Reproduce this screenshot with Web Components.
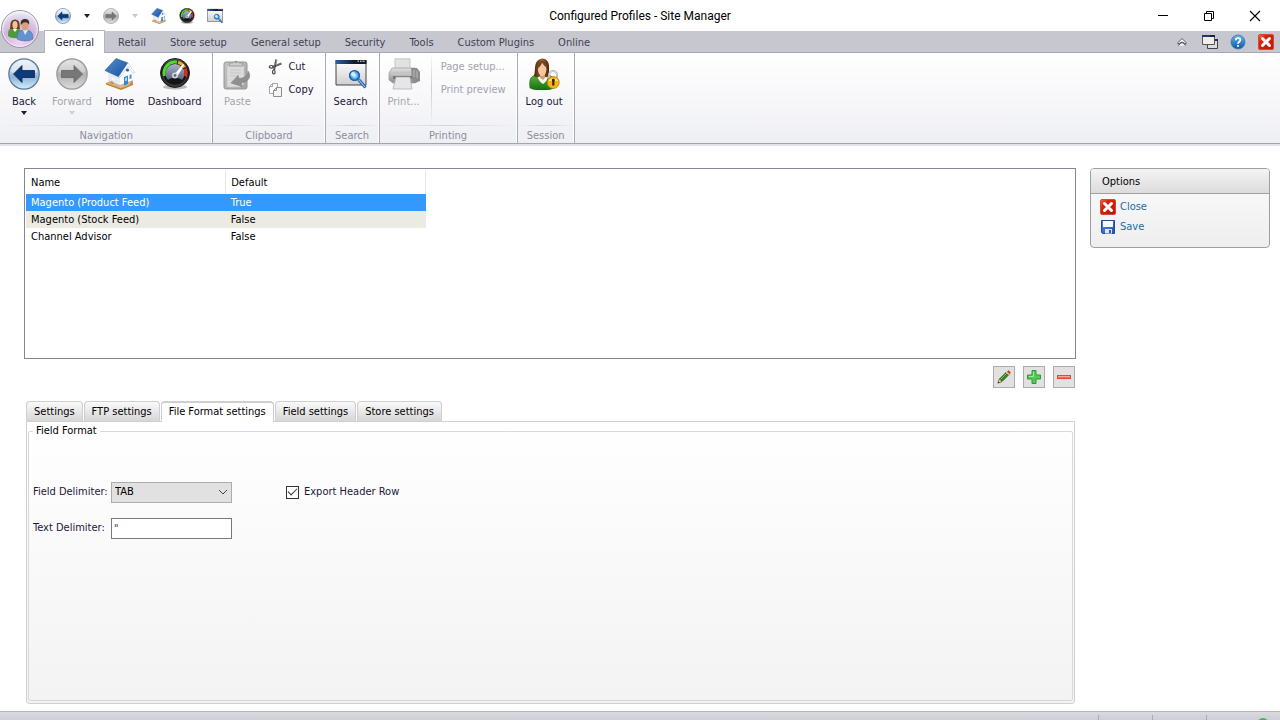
<!DOCTYPE html>
<html lang="en">
<head>
<meta charset="utf-8">
<title>Configured Profiles - Site Manager</title>
<style>
  body {
    margin: 0;
    height: 100vh;
    overflow: hidden;
    display: flex;
    flex-direction: column;
    background: #fff;
    color: #000;
    font: 11px/16px "DejaVu Sans Condensed", "DejaVu Sans", sans-serif;
  }
  main {
    flex: 1;
    min-height: 0;
    display: flex;
    align-items: flex-start;
    gap: 14px;
    padding: 24px 10px 7px 24px;
    box-sizing: border-box;
  }
  .workspace {
    flex: 1;
    align-self: stretch;
    display: flex;
    flex-direction: column;
  }
</style>
</head>
<body>
<title-bar>Configured Profiles - Site Manager</title-bar>
<ribbon-tabs></ribbon-tabs>
<ribbon-bar>
  <ribbon-group label="Navigation">
    <ribbon-button icon="back" arrow>Back</ribbon-button>
    <ribbon-button icon="forward" arrow disabled>Forward</ribbon-button>
    <ribbon-button icon="home">Home</ribbon-button>
    <ribbon-button icon="dashboard">Dashboard</ribbon-button>
  </ribbon-group>
  <ribbon-group label="Clipboard">
    <ribbon-button icon="paste" disabled>Paste</ribbon-button>
    <ribbon-column>
      <ribbon-button small icon="cut">Cut</ribbon-button>
      <ribbon-button small icon="copy">Copy</ribbon-button>
    </ribbon-column>
  </ribbon-group>
  <ribbon-group label="Search">
    <ribbon-button icon="search">Search</ribbon-button>
  </ribbon-group>
  <ribbon-group label="Printing">
    <ribbon-button icon="print" disabled>Print...</ribbon-button>
    <ribbon-column divided>
      <ribbon-button small disabled>Page setup...</ribbon-button>
      <ribbon-button small disabled>Print preview</ribbon-button>
    </ribbon-column>
  </ribbon-group>
  <ribbon-group label="Session">
    <ribbon-button icon="logout">Log out</ribbon-button>
  </ribbon-group>
</ribbon-bar>
<main>
  <div class="workspace">
    <profile-list></profile-list>
    <list-actions></list-actions>
    <settings-tabs>
      <format-form></format-form>
    </settings-tabs>
  </div>
  <options-panel></options-panel>
</main>
<status-bar></status-bar>

<script>
// Icon artwork. Everything is drawn on its own viewBox and scaled by ui-icon.
const ICONS = {
  back: ['0 0 32 32', `
    <defs><linearGradient id="a" x2="0" y2="1"><stop stop-color="#e4edf6"/><stop offset=".45" stop-color="#b4cbe2"/><stop offset=".6" stop-color="#8fb2d6"/><stop offset="1" stop-color="#d3f1fb"/></linearGradient></defs>
    <circle cx="16" cy="16" r="15.2" fill="url(#a)" stroke="#5b7899" stroke-width="1.2"/>
    <path d="M3 14a13 12 0 0 1 26 0c-8 3-18 3-26 0z" fill="#fff" opacity=".45"/>
    <path d="M5.500 16 14 7.500v5h12.500v7H14v5z" fill="#0d3a78" stroke="#072555" stroke-width=".8"/>`],
  forward: ['0 0 32 32', `
    <defs><linearGradient id="a" x2="0" y2="1"><stop stop-color="#dcdcdc"/><stop offset=".55" stop-color="#b2b2b2"/><stop offset="1" stop-color="#dedede"/></linearGradient></defs>
    <circle cx="16" cy="16" r="15.200" fill="url(#a)" stroke="#999" stroke-width="1.200"/>
    <path d="M3 14a13 12 0 0 1 26 0c-8 3-18 3-26 0z" fill="#fff" opacity=".25"/>
    <path d="M26.500 16 18 7.500v5H5.500v7H18v5z" fill="#777" stroke="#666" stroke-width=".8"/>`],
  home: ['0 0 32 32', `
    <defs><linearGradient id="a" x2="1" y2="1"><stop stop-color="#4f8fd2"/><stop offset="1" stop-color="#1c4f9d"/></linearGradient></defs>
    <path d="m2 25 8-4 19 4-12 6z" fill="#dda85a"/><path d="m2 25 15 5.500 12-5v1.500l-12 5-15-5.500z" fill="#b98034"/>
    <path d="M4 13v11l12 5V16z" fill="#e9eef4"/><path d="M16 18 24 6l5.500 9v9L16 29.500z" fill="#fafcff"/>
    <path d="M5 22.500 16 27v2.500L5 25zM16 27l13-5v2.500l-13 5z" fill="#c9b79b"/>
    <path d="M12 .5 24 5l-9 14L1 12.500z" fill="url(#a)" stroke="#2a5d9f" stroke-width=".6"/>
    <path d="m24 5 7 9.500-2 .8L24 8l-8 11.500-1.300-.7z" fill="#fff" stroke="#aab9cb" stroke-width=".5"/>
    <path d="m20 19 4-1.500v8.500l-4 1.500z" fill="#3d86c8"/><path d="m21 20 2-.7v3.200l-2 .7z" fill="#a6dcf8"/>
    <path d="m25.500 17 2-.8v4.300l-2 .8z" fill="#4b92d4"/><circle cx="23.500" cy="12" r="1.600" fill="#2864ad"/>
    <path d="m7 18 4 1.600v3.800L7 22z" fill="#fff" stroke="#c8d2dc" stroke-width=".5"/>
    <path d="m6 25 2-2 2 3zM25 27l3-4 1 3z" fill="#d77b2c"/>`],
  dashboard: ['0 0 32 32', `
    <defs><linearGradient id="a" x2="0" y2="1"><stop stop-color="#555"/><stop offset=".4" stop-color="#111"/><stop offset="1" stop-color="#333"/></linearGradient>
    <linearGradient id="b" x2="0" y2="1"><stop stop-color="#aab3c5"/><stop offset="1" stop-color="#59637a"/></linearGradient></defs>
    <ellipse cx="16" cy="29" rx="12" ry="2.500" fill="#bbb"/>
    <circle cx="16" cy="15" r="14.500" fill="url(#a)" stroke="#222"/>
    <circle cx="16" cy="15" r="12.500" fill="#161616" stroke="#555" stroke-width=".7"/>
    <path d="M5.500 18A11 11 0 0 1 18 4.200" fill="none" stroke="#45df25" stroke-width="3"/>
    <path d="M19 4.400a11 11 0 0 1 6.500 5" fill="none" stroke="#f6a919" stroke-width="3"/>
    <path d="M26 10.500a11 11 0 0 1 .5 8" fill="none" stroke="#ee2517" stroke-width="3"/>
    <path d="M9 22a9.500 9.500 0 1 1 14 0c-3-3-11-3-14 0z" fill="url(#b)"/>
    <path d="m15 17 9-11 1.200 1L18 19z" fill="#fff"/><circle cx="16" cy="17.500" r="3" fill="#d5dae4"/><circle cx="16" cy="17.500" r="1.400" fill="#626b7d"/>`],
  paste: ['0 0 32 32', `
    <defs><linearGradient id="a" x2="1" y2="1"><stop stop-color="#c4c4c4"/><stop offset="1" stop-color="#a4a4a4"/></linearGradient></defs>
    <rect x="3" y="4" width="23" height="27" rx="2" fill="url(#a)" stroke="#979797"/>
    <path d="M6 8h17v18l-4 3H6z" fill="#dadada" stroke="#c4c4c4" stroke-width=".6"/>
    <path d="M8.500 8V5h3.500a3.500 3.500 0 0 1 6 0h3.500v3z" fill="#cdcdcd" stroke="#999" stroke-width=".8"/>
    <circle cx="15" cy="4" r="1.200" fill="#999"/>
    <path d="M9 12h11M9 15h11M9 18h8" stroke="#c9c9c9"/>
    <path d="M27 13c4 5 1 11-7 12l1 3.500L10 25l7-7.500 1 3c5 0 9-3 9-7.500z" fill="#909090" stroke="#838383" stroke-width=".6"/>`],
  cut: ['0 0 16 16', `
    <path d="M8.500.500C7 4 7.500 7 6 11" stroke="#555" stroke-width="2" fill="none"/>
    <path d="M13.500 4.500 4.500 8" stroke="#666" stroke-width="2" fill="none"/>
    <path d="M8.500.500C8.500 4 8 7 7 10" stroke="#bbb" stroke-width=".6" fill="none"/>
    <ellipse cx="3.300" cy="7.800" rx="2" ry="1.300" fill="none" stroke="#444" stroke-width="1.200"/>
    <ellipse cx="5.800" cy="13" rx="1.300" ry="2" fill="none" stroke="#444" stroke-width="1.200"/>
    <circle cx="7.400" cy="7" r=".8" fill="#222"/>`],
  copy: ['0 0 16 16', `
    <path d="M4.500 1.500h5v10h-8v-7z" fill="#fafafa" stroke="#a5a5a5"/><path d="M4.500 1.500v3h-3" fill="none" stroke="#a5a5a5"/>
    <path d="M8.500 5.500h5v9h-8v-6z" fill="#f4f4f4" stroke="#8c8c8c"/><path d="M8.500 5.500v3h-3" fill="none" stroke="#8c8c8c"/>`],
  search: ['0 0 32 32', `
    <defs><linearGradient id="a" x2="0" y2="1"><stop stop-color="#fff"/><stop offset="1" stop-color="#cfcfcf"/></linearGradient>
    <linearGradient id="c"><stop stop-color="#2a62ad"/><stop offset=".6" stop-color="#141c2c"/></linearGradient>
    <radialGradient id="b"><stop stop-color="#dff9ff"/><stop offset=".5" stop-color="#69c5f5"/><stop offset="1" stop-color="#1464c8"/></radialGradient></defs>
    <path d="M1 2.500h30V27H1z" fill="url(#a)" stroke="#444"/>
    <path d="M.5 2h31v4H.5z" fill="url(#c)"/>
    <path d="M22.500 3.200h1.500m1 0h1.500m1 0h2" stroke="#eee"/>
    <path d="m23.500 21.500 7 8" stroke="#20539c" stroke-width="3.200"/><path d="m23.500 21.500 6.500 7.500" stroke="#80b6e8" stroke-width="1.300"/>
    <circle cx="19.500" cy="17.500" r="5" fill="url(#b)" stroke="#2059ad" stroke-width="1.200"/>
    <path d="M19.500 13.500v4h-4a4 4 0 0 1 4-4z" fill="#fff" opacity=".7"/>`],
  print: ['0 0 32 32', `
    <defs><linearGradient id="a" x2="0" y2="1"><stop stop-color="#e1e1e1"/><stop offset="1" stop-color="#8c8c8c"/></linearGradient></defs>
    <path d="M7 .8h15V13H7z" fill="#e2e2e2" stroke="#bbb" stroke-width=".8"/>
    <path d="M4 10h23l4 4v8l-4 3H5l-4-3v-7z" fill="url(#a)" stroke="#999" stroke-width=".7"/>
    <path d="M23 10h6l3 4v9l-5 2-3-4z" fill="#8c8c8c"/><path d="M3 14h20v3H3z" fill="#c4c4c4"/>
    <path d="M5 18h19v3H5z" fill="#777"/><path d="M8 19h14l2 12H5z" fill="#e6e6e6" stroke="#aaa" stroke-width=".7"/>
    <path d="M26 12v7M29 13v7" stroke="#bbb"/>`],
  logout: ['0 0 32 32', `
    <defs><linearGradient id="a" x2="0" y2="1"><stop stop-color="#57b33b"/><stop offset="1" stop-color="#13700e"/></linearGradient>
    <linearGradient id="b" x2="1"><stop stop-color="#4b270d"/><stop offset=".5" stop-color="#9b6032"/><stop offset="1" stop-color="#4b270d"/></linearGradient></defs>
    <path d="M2 30c-1-7 0-12 6-13h12c6 1 7 7 6 13-6 3-18 3-24 0z" fill="url(#a)" stroke="#17620f" stroke-width=".6"/>
    <path d="M9 16c1 6 3 8 6 10 3-2 5-5 5-10z" fill="#f4faf0"/>
    <path d="M6 18C8 12 5 2 14 .5c9 .5 7 10 7 17-2 2-3 2-5 1h-4c-2 1-4 1-6-.5z" fill="url(#b)"/>
    <path d="M12 16h5v4l-2 2-3-2z" fill="#d99c73"/><ellipse cx="14.200" cy="11.500" rx="4.200" ry="6.500" fill="#f5c6a2"/>
    <path d="M10 10c2-1 4-4 4-6 1 3 3 4 5 6 0-5-2-7-5-7s-5 3-4 7z" fill="#7a431d"/>
    <path d="M21 20v-3a4 4 0 0 1 8 0v3" fill="none" stroke="#aaa" stroke-width="2"/><path d="M21 20v-3a4 4 0 0 1 8 0v3" fill="none" stroke="#eee" stroke-width=".7"/>
    <circle cx="25.200" cy="24.500" r="6" fill="#f4b51b" stroke="#b67b07" stroke-width=".8"/><path d="M20.500 23a5 4 0 0 1 9.500 0z" fill="#ffe277"/>
    <path d="M24.200 22.500h2.200v5h-2.200z" fill="#3b2400"/><circle cx="25.300" cy="22" r="1.500" fill="#3b2400"/>`],
  users: ['0 0 40 40', `
    <defs><radialGradient id="a" cx=".5" cy=".85" r=".9"><stop stop-color="#f3d6f3"/><stop offset=".5" stop-color="#d2b3dc"/><stop offset=".8" stop-color="#e3dced"/><stop offset="1" stop-color="#fff"/></radialGradient></defs>
    <circle cx="20" cy="20" r="18.500" fill="url(#a)" stroke="#9d93ab"/><circle cx="20" cy="20" r="17.300" fill="none" stroke="#fff" opacity=".65"/>
    <path d="M8 27c0-6 1-8 6-8s8 2 8 8c-4 3-10 3-14 0z" fill="#4f9a39"/><path d="m12 19 3 4 3-4z" fill="#fff"/>
    <path d="M10 20c1-3-1-9 5-9.500 6 .5 4 6 5 9.500z" fill="#6b3b19"/><ellipse cx="15" cy="16" rx="2.600" ry="4" fill="#f1c29f"/>
    <path d="M17 30c0-7 2-9 8-9s8 3 8 9c-4 2.500-12 2.500-16 0z" fill="#6592cc" stroke="#446eaa" stroke-width=".6"/>
    <path d="m23 21 2 5 3-5z" fill="#dceaf8"/><ellipse cx="25" cy="16.500" rx="3.400" ry="5" fill="#dca078"/>
    <path d="M21 16c-1-4 1-6 4-6s5 2 4 6c-1-3-5-4-8 0z" fill="#3c3029"/>`],
  windows: ['0 0 16 16', `
    <path d="M5.500 5.500h10v9h-10z" fill="#ddd" stroke="#444"/><path d="M5 5h11v2H5z" fill="#16376a"/>
    <path d="M.5 1.500h12v9H.5z" fill="#eee" stroke="#555"/><path d="M0 1h13v2H0z" fill="#163c73"/><path d="M8 1h5v2H8z" fill="#222"/>`],
  help: ['0 0 16 16', `
    <defs><linearGradient id="a" x2="0" y2="1"><stop stop-color="#67b8ea"/><stop offset="1" stop-color="#0a55a6"/></linearGradient></defs>
    <circle cx="8" cy="8" r="7" fill="url(#a)" stroke="#3975ab" stroke-width=".8"/>
    <path d="M5.800 6.300c0-3 4.600-3 4.600-.3C10.400 7.800 8 7.800 8 9.800" fill="none" stroke="#fff" stroke-width="1.700"/><circle cx="8" cy="12" r="1.100" fill="#fff"/>`],
  close: ['0 0 16 16', `
    <defs><linearGradient id="a" x2="1" y2="1"><stop stop-color="#f36c45"/><stop offset=".3" stop-color="#d62713"/><stop offset="1" stop-color="#b91507"/></linearGradient></defs>
    <rect x=".5" y=".5" width="15" height="15" rx="1.500" fill="url(#a)" stroke="#d9472c"/>
    <path d="m4.500 4.500 7 7m0-7-7 7" stroke="#fff" stroke-width="3" stroke-linecap="round"/>`],
  save: ['0 0 16 16', `
    <defs><linearGradient id="a" x2="1" y2="1"><stop stop-color="#5589dc"/><stop offset="1" stop-color="#1d55b8"/></linearGradient></defs>
    <path d="M1.500 1.500h13v13h-12l-1-1z" fill="url(#a)" stroke="#234c96"/>
    <path d="M3 2h10v6H3z" fill="#f5f9ff"/><path d="M5 10h7v4.500H5z" fill="#dfe5ed"/><path d="M9 11h2v3H9z" fill="#2a59a8"/>`],
  pencil: ['0 0 16 16', `
    <path d="m2.500 13.500 1-3.500L10.500 3l2.500 2.500L6 12.500z" fill="#2f8426" stroke="#27491d" stroke-width=".8"/>
    <path d="m4.500 10.500 7-7" stroke="#8fd06c" stroke-width=".8"/><path d="m2 14 1.300-4L6 12.700z" fill="#f4d68d" stroke="#6d4b16" stroke-width=".5"/>
    <path d="m10 3.500 1-1L13.500 5l-1 1z" fill="#e5d29a"/><path d="m11 2.500 1.500-1.300L14.800 3.500 13.500 5z" fill="#dd291b"/><path d="m1.500 14.500.8-2 1.200 1.200z" fill="#222"/>`],
  plus: ['0 0 16 16', `<path d="M6 1.500h4V6h4.500v4H10v4.500H6V10H1.500V6H6z" fill="#54ca54" stroke="#289b31"/><path d="M7.500 3v4.500H3" fill="none" stroke="#a1eb99"/>`],
  minus: ['0 0 16 16', `<rect x="1.500" y="6.500" width="13" height="3" fill="#f66f51" stroke="#df4a2e"/><path d="M2 7.500h12" stroke="#ffa68f"/>`],
  chevron: ['0 0 12 12', `<path d="m2 6.500 4-4 4 4v1.500L6 6 2 8zm0 3 4-3 4 3" fill="#fff" stroke="#545866" stroke-width="1"/>`],
  minimize: ['0 0 12 12', `<path d="M1 5.500h10" stroke="#000"/>`],
  restore: ['0 0 12 12', `<path d="M1.500 3.500h7v7h-7zM3.500 3.500v-2h7v7h-2" fill="none" stroke="#000"/>`],
  exit: ['0 0 12 12', `<path d="m1 1 10 10M11 1 1 11" stroke="#000" stroke-width="1.100"/>`]
};

const BUTTON_RESET = `
  button {
    margin: 0;
    padding: 0;
    border: 0;
    background: none;
    color: inherit;
    font: inherit;
  }
`;

class UiIcon extends HTMLElement {
  connectedCallback() {
    const [box, art] = ICONS[this.getAttribute('name')];
    const size = this.getAttribute('size') || 16;
    this.attachShadow({ mode: 'open' }).innerHTML = `
      <style>
        :host { display: block; flex: none; width: ${size}px; height: ${size}px; }
        svg { display: block; width: 100%; height: 100%; }
      </style>
      <svg viewBox="${box}" aria-hidden="true">${art}</svg>
    `;
  }
}
customElements.define('ui-icon', UiIcon);

class TitleBar extends HTMLElement {
  connectedCallback() {
    this.attachShadow({ mode: 'open' }).innerHTML = `
      <style>
        :host {
          display: grid;
          grid-template-columns: 1fr auto 1fr;
          align-items: center;
          flex: none;
          height: 31px;
          position: relative;
          background: #fff;
        }
        ${BUTTON_RESET}
        .quick { display: flex; padding-left: 49px; }
        .quick button { width: 28px; height: 28px; display: grid; place-items: center; }
        .quick .drop { width: 20px; }
        .drop::before {
          content: '';
          border: 3px solid transparent;
          border-top: 4px solid #222;
          border-bottom: 0;
        }
        .drop:disabled::before { border-top-color: #c8c8cc; }
        h1 { margin: 0; font: 12px/28px Roboto, sans-serif; }
        .controls { display: flex; justify-content: flex-end; padding-right: 2px; }
        .controls button { width: 46px; height: 28px; display: grid; place-items: center; }
        .orb { position: absolute; left: 0; top: 9px; z-index: 2; }
      </style>
      <div class="quick">
        <button aria-label="Back"><ui-icon name="back"></ui-icon></button>
        <button class="drop" aria-label="Back history"></button>
        <button aria-label="Forward" disabled><ui-icon name="forward"></ui-icon></button>
        <button class="drop" aria-label="Forward history" disabled></button>
        <button aria-label="Home"><ui-icon name="home"></ui-icon></button>
        <button aria-label="Dashboard"><ui-icon name="dashboard"></ui-icon></button>
        <button aria-label="Search"><ui-icon name="search"></ui-icon></button>
      </div>
      <h1><slot></slot></h1>
      <div class="controls">
        <button aria-label="Minimize"><ui-icon name="minimize" size="12"></ui-icon></button>
        <button aria-label="Restore"><ui-icon name="restore" size="12"></ui-icon></button>
        <button aria-label="Close window"><ui-icon name="exit" size="12"></ui-icon></button>
      </div>
      <button class="orb" aria-label="Application menu"><ui-icon name="users" size="40"></ui-icon></button>
    `;
  }
}
customElements.define('title-bar', TitleBar);

class RibbonTabs extends HTMLElement {
  connectedCallback() {
    const tabs = ['General', 'Retail', 'Store setup', 'General setup', 'Security', 'Tools', 'Custom Plugins', 'Online'];
    this.attachShadow({ mode: 'open' }).innerHTML = `
      <style>
        :host {
          display: flex;
          justify-content: space-between;
          flex: none;
          height: 22px;
          background: #c7c7cf;
          border-bottom: 1px solid #a6a8b6;
          box-sizing: border-box;
        }
        ${BUTTON_RESET}
        nav { display: flex; gap: 4px; padding-left: 45px; }
        nav button { height: 22px; padding: 2px 10px 0; color: #3f3f55; }
        nav button[aria-selected=true] { background: #fff; color: #1e1b3a; box-shadow: 0 0 0 1px #b3b4c1; clip-path: inset(-1px -1px 0); }
        .tools { display: flex; }
        .tools button { width: 28px; display: grid; place-items: center; }
      </style>
      <nav role="tablist">
        ${tabs.map((t, i) => `<button role="tab" aria-selected="${i === 0}">${t}</button>`).join('')}
      </nav>
      <div class="tools">
        <button aria-label="Collapse ribbon"><ui-icon name="chevron" size="12"></ui-icon></button>
        <button aria-label="Windows"><ui-icon name="windows"></ui-icon></button>
        <button aria-label="Help"><ui-icon name="help"></ui-icon></button>
        <button aria-label="Close page"><ui-icon name="close"></ui-icon></button>
      </div>
    `;
  }
}
customElements.define('ribbon-tabs', RibbonTabs);

class RibbonBar extends HTMLElement {
  connectedCallback() {
    this.attachShadow({ mode: 'open' }).innerHTML = `
      <style>
        :host {
          display: flex;
          flex: none;
          height: 91px;
          box-sizing: border-box;
          border-bottom: 1px solid #a3a4ae;
          background: linear-gradient(#fff, #f6f6f9 60%, #eeeff3);
          box-shadow: 0 2px 1px #e3e3e7;
        }
      </style>
      <slot></slot>
    `;
  }
}
customElements.define('ribbon-bar', RibbonBar);

class RibbonGroup extends HTMLElement {
  connectedCallback() {
    this.attachShadow({ mode: 'open' }).innerHTML = `
      <style>
        :host {
          display: flex;
          flex-direction: column;
          border-right: 1px solid #a9aab6;
          box-shadow: inset -1px 0 #fff;
        }
        .items { flex: 1; display: flex; padding: 0 5px 0 2px; }
        .label {
          height: 17px;
          line-height: 19px;
          text-align: center;
          color: #8c8d9c;
          border-top: 1px solid;
          border-image: linear-gradient(90deg, transparent, #d3d4da, transparent) 1;
        }
      </style>
      <div class="items"><slot></slot></div>
      <div class="label">${this.getAttribute('label')}</div>
    `;
  }
}
customElements.define('ribbon-group', RibbonGroup);

class RibbonColumn extends HTMLElement {
  connectedCallback() {
    this.attachShadow({ mode: 'open' }).innerHTML = `
      <style>
        :host { display: flex; flex-direction: column; padding: 2px 1px 0 4px; }
        :host([divided]) {
          margin-left: 5px;
          border-left: 1px solid;
          border-image: linear-gradient(transparent, #cccdd4, transparent) 1;
        }
      </style>
      <slot></slot>
    `;
  }
}
customElements.define('ribbon-column', RibbonColumn);

class RibbonButton extends HTMLElement {
  connectedCallback() {
    const icon = this.getAttribute('icon');
    const small = this.hasAttribute('small');
    this.attachShadow({ mode: 'open' }).innerHTML = `
      <style>
        :host { display: block; color: #1b1838; }
        :host([disabled]) { color: #a2a3b0; }
        ${BUTTON_RESET}
        button {
          display: flex;
          flex-direction: column;
          align-items: center;
          padding: 5px 6px 0;
          white-space: nowrap;
        }
        .text { margin-top: 4px; }
        .arrow {
          margin-top: 1px;
          border: 3px solid transparent;
          border-top: 4px solid;
          border-bottom: 0;
        }
        :host([disabled]) .arrow { color: #d0d0d6; }
        :host([small]) button { flex-direction: row; gap: 4px; height: 23px; padding: 0 5px; }
        :host([small]) .text { margin: 0; }
      </style>
      <button ${this.hasAttribute('disabled') ? 'disabled' : ''}>
        ${icon ? `<ui-icon name="${icon}" size="${small ? 16 : 32}"></ui-icon>` : ''}
        <span class="text"><slot></slot></span>
        ${this.hasAttribute('arrow') ? '<span class="arrow"></span>' : ''}
      </button>
    `;
  }
}
customElements.define('ribbon-button', RibbonButton);

class ProfileList extends HTMLElement {
  connectedCallback() {
    const rows = [
      ['Magento (Product Feed)', 'True'],
      ['Magento (Stock Feed)', 'False'],
      ['Channel Advisor', 'False']
    ];
    this.attachShadow({ mode: 'open' }).innerHTML = `
      <style>
        :host {
          display: block;
          flex: none;
          height: 191px;
          box-sizing: border-box;
          border: 1px solid #828790;
          background: #fff;
          padding: 1px;
        }
        table { width: 400px; table-layout: fixed; border-collapse: collapse; }
        th, td { padding: 1px 5px 0; text-align: left; font-weight: normal; }
        th { height: 23px; border-right: 1px solid #e5e5e5; }
        td { height: 16px; line-height: 16px; }
        tbody tr:nth-child(even) { background: #ebebe4; }
        tbody tr.selected { background: #3399ff; color: #fff; }
      </style>
      <table>
        <thead><tr><th>Name</th><th>Default</th></tr></thead>
        <tbody>
          ${rows.map((r, i) => `<tr class="${i === 0 ? 'selected' : ''}"><td>${r[0]}</td><td>${r[1]}</td></tr>`).join('')}
        </tbody>
      </table>
    `;
  }
}
customElements.define('profile-list', ProfileList);

class ListActions extends HTMLElement {
  connectedCallback() {
    this.attachShadow({ mode: 'open' }).innerHTML = `
      <style>
        :host { display: flex; justify-content: flex-end; gap: 8px; padding: 7px 1px 13px; }
        button {
          width: 22px;
          height: 22px;
          padding: 0;
          display: grid;
          place-items: center;
          background: #e1e1e1;
          border: 1px solid #adadad;
        }
      </style>
      <button aria-label="Edit"><ui-icon name="pencil"></ui-icon></button>
      <button aria-label="Add"><ui-icon name="plus"></ui-icon></button>
      <button aria-label="Remove"><ui-icon name="minus"></ui-icon></button>
    `;
  }
}
customElements.define('list-actions', ListActions);

class SettingsTabs extends HTMLElement {
  connectedCallback() {
    const tabs = ['Settings', 'FTP settings', 'File Format settings', 'Field settings', 'Store settings'];
    this.attachShadow({ mode: 'open' }).innerHTML = `
      <style>
        :host { display: flex; flex-direction: column; flex: 1; min-height: 0; padding: 0 1px 0 2px; }
        ${BUTTON_RESET}
        .tabs { display: flex; gap: 1px; }
        .tabs button {
          height: 20px;
          padding: 0 7px;
          border: 1px solid #cfcfcf;
          border-bottom: 0;
          border-radius: 4px 4px 0 0;
          background: linear-gradient(#fafafa, #d6d6d6);
        }
        .tabs button[aria-selected=true] {
          height: 21px;
          margin-bottom: -1px;
          padding-bottom: 2px;
          border-top-width: 2px;
          background: #fff;
          z-index: 1;
        }
        .panel {
          flex: 1;
          display: flex;
          border: 1px solid #d0d0d0;
          border-radius: 0 0 3px 3px;
          background: linear-gradient(#fff, #f3f3f3);
          padding: 0 1px 2px;
        }
      </style>
      <div class="tabs" role="tablist">
        ${tabs.map((t, i) => `<button role="tab" aria-selected="${i === 2}">${t}</button>`).join('')}
      </div>
      <div class="panel"><slot></slot></div>
    `;
  }
}
customElements.define('settings-tabs', SettingsTabs);

class FormatForm extends HTMLElement {
  connectedCallback() {
    this.attachShadow({ mode: 'open' }).innerHTML = `
      <style>
        :host { display: flex; flex: 1; color: #1b1838; }
        fieldset {
          flex: 1;
          margin: 1px 0 0;
          padding: 0 4px;
          border: 1px solid #d8d8d8;
          border-radius: 2px;
        }
        legend { padding: 0 3px; color: #000; }
        .grid {
          display: grid;
          grid-template-columns: 78px 121px auto;
          grid-auto-rows: 22px;
          row-gap: 14px;
          align-items: center;
          justify-content: start;
          padding-top: 42px;
        }
        select, input[type=text] {
          width: 100%;
          height: 21px;
          box-sizing: border-box;
          margin: 0;
          font: inherit;
          border-radius: 0;
        }
        .select { display: grid; align-items: center; }
        .select > * { grid-area: 1 / 1; }
        select { appearance: none; padding: 0 3px; background: #e1e1e1; border: 1px solid #adadad; color: #000; }
        .select svg { width: 10px; height: 6px; justify-self: end; margin-right: 4px; pointer-events: none; }
        input[type=text] { padding: 0 2px; background: #fff; border: 1px solid #7a7a7a; color: #5a3a10; }
        .check { display: flex; align-items: center; gap: 5px; margin-left: 54px; }
        input[type=checkbox] {
          appearance: none;
          width: 13px;
          height: 13px;
          margin: 0;
          border: 1px solid #333;
          background: #fff;
          display: grid;
          place-items: center;
        }
        input[type=checkbox]:checked::before {
          content: '';
          width: 9px;
          height: 5px;
          margin-bottom: 3px;
          box-sizing: border-box;
          border: solid #333;
          border-width: 0 0 1px 1px;
          transform: rotate(-45deg);
        }
      </style>
      <fieldset>
        <legend>Field Format</legend>
        <div class="grid">
          <label for="field">Field Delimiter:</label>
          <div class="select">
            <select id="field"><option>TAB</option></select>
            <svg viewBox="0 0 10 6" aria-hidden="true"><path d="m1 1 4 4 4-4" fill="none" stroke="#444"/></svg>
          </div>
          <div class="check">
            <input type="checkbox" id="header" checked>
            <label for="header">Export Header Row</label>
          </div>
          <label for="text">Text Delimiter:</label>
          <input type="text" id="text" value="&quot;">
        </div>
      </fieldset>
    `;
  }
}
customElements.define('format-form', FormatForm);

class OptionsPanel extends HTMLElement {
  connectedCallback() {
    this.attachShadow({ mode: 'open' }).innerHTML = `
      <style>
        :host {
          display: block;
          flex: none;
          width: 180px;
          box-sizing: border-box;
          border: 1px solid #a0a0a0;
          border-radius: 4px;
          background: linear-gradient(#fcfcfc, #eee);
          overflow: hidden;
        }
        h2 {
          margin: 0;
          padding: 1px 11px 0;
          font: inherit;
          line-height: 23px;
          border-bottom: 1px solid #a0a0a0;
          background: linear-gradient(#f4f4f4, #dcdcdc);
        }
        ul { list-style: none; margin: 0; padding: 3px 9px 10px; }
        a { display: flex; align-items: center; gap: 4px; height: 20px; color: #226ca5; text-decoration: none; }
      </style>
      <h2>Options</h2>
      <ul>
        <li><a href="#close"><ui-icon name="close"></ui-icon>Close</a></li>
        <li><a href="#save"><ui-icon name="save"></ui-icon>Save</a></li>
      </ul>
    `;
  }
}
customElements.define('options-panel', OptionsPanel);

class StatusBar extends HTMLElement {
  connectedCallback() {
    this.attachShadow({ mode: 'open' }).innerHTML = `
      <style>
        :host {
          display: flex;
          justify-content: flex-end;
          flex: none;
          height: 9px;
          box-sizing: border-box;
          overflow: hidden;
          border-top: 1px solid #b4b5bd;
          background: linear-gradient(#d9dae0, #cecfd6);
        }
        span { width: 53px; margin-top: 3px; border-left: 1px solid #aaabb4; }
        span:last-child { width: 73px; }
        i { display: block; width: 12px; height: 12px; margin: 3px auto 0 50px; border-radius: 50%; background: #35bd48; }
      </style>
      <span></span><span></span><span><i></i></span>
    `;
  }
}
customElements.define('status-bar', StatusBar);
</script>
</body>
</html>
